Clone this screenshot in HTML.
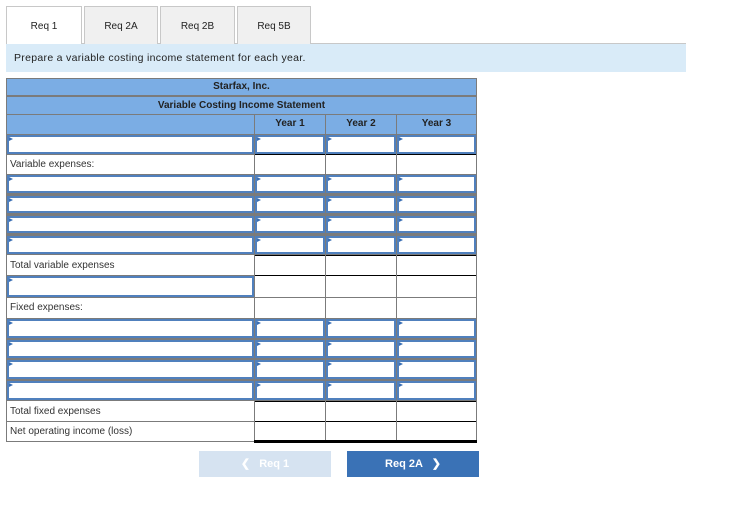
<!DOCTYPE html>
<html><head><style>
body{margin:0;width:743px;height:518px;background:#fff;font-family:"Liberation Sans",Verdana,sans-serif;position:relative;overflow:hidden}
.a{position:absolute;box-sizing:border-box}
.tab{top:6px;height:38px;background:#f0f0f0;border:1px solid #c8c8c8;border-bottom:none;font-size:10px;color:#222;text-align:center;line-height:40px}
.c{position:absolute;box-sizing:border-box;background:#fff;font-size:10px;color:#333;padding-left:3px;line-height:19px}
.i{box-shadow:inset 0 0 0 2px #5080bd}
.i:before{content:"";position:absolute;left:2px;top:2px;border-left:4px solid #3a6fb5;border-top:2.5px solid transparent;border-bottom:2.5px solid transparent}
.bt{border-top:1px solid #000}
.h{position:absolute;background:#7badE4;font-size:10px;font-weight:bold;color:#222;text-align:center;box-sizing:border-box}
</style></head><body>
<div class="a" style="left:6px;top:43px;width:680px;height:1px;background:#c8c8c8"></div>
<div class="a tab" style="left:6px;width:76px;background:#fff;height:39px">Req 1</div>
<div class="a tab" style="left:84px;width:74px">Req 2A</div>
<div class="a tab" style="left:160px;width:75px">Req 2B</div>
<div class="a tab" style="left:237px;width:74px">Req 5B</div>
<div class="a" style="left:6px;top:44px;width:680px;height:28px;background:#d9ebf8;font-size:10.5px;color:#222;padding-left:8px;line-height:28px;letter-spacing:0.3px">Prepare a variable costing income statement for each year.</div>

<div class="a" style="left:6px;top:78px;width:471px;height:364px;background:#7b7b7b"></div>
<div class="h" style="left:7px;top:79px;width:469px;height:16px;line-height:16px">Starfax, Inc.</div>
<div class="h" style="left:7px;top:97px;width:469px;height:17px;line-height:17px">Variable Costing Income Statement</div>
<div class="h" style="left:7px;top:115px;width:247px;height:19px"></div>
<div class="h" style="left:255px;top:115px;width:70px;height:19px;line-height:17px">Year 1</div>
<div class="h" style="left:326px;top:115px;width:70px;height:19px;line-height:17px">Year 2</div>
<div class="h" style="left:397px;top:115px;width:79px;height:19px;line-height:17px">Year 3</div>

<div class="c i" style="left:7px;top:135px;width:247px;height:19px"></div>
<div class="c i" style="left:255px;top:135px;width:70px;height:19px"></div>
<div class="c i" style="left:326px;top:135px;width:70px;height:19px"></div>
<div class="c i" style="left:397px;top:135px;width:79px;height:19px"></div>
<div class="c" style="left:7px;top:155px;width:247px;height:19px">Variable expenses:</div>
<div class="c bt" style="left:255px;top:154px;width:70px;height:20px"></div>
<div class="c bt" style="left:326px;top:154px;width:70px;height:20px"></div>
<div class="c bt" style="left:397px;top:154px;width:79px;height:20px"></div>
<div class="c i" style="left:7px;top:175px;width:247px;height:18px"></div><div class="c i" style="left:255px;top:175px;width:70px;height:18px"></div><div class="c i" style="left:326px;top:175px;width:70px;height:18px"></div><div class="c i" style="left:397px;top:175px;width:79px;height:18px"></div>
<div class="c i" style="left:7px;top:196px;width:247px;height:17px"></div><div class="c i" style="left:255px;top:196px;width:70px;height:17px"></div><div class="c i" style="left:326px;top:196px;width:70px;height:17px"></div><div class="c i" style="left:397px;top:196px;width:79px;height:17px"></div>
<div class="c i" style="left:7px;top:216px;width:247px;height:17px"></div><div class="c i" style="left:255px;top:216px;width:70px;height:17px"></div><div class="c i" style="left:326px;top:216px;width:70px;height:17px"></div><div class="c i" style="left:397px;top:216px;width:79px;height:17px"></div>
<div class="c i" style="left:7px;top:236px;width:247px;height:18px"></div><div class="c i" style="left:255px;top:236px;width:70px;height:18px"></div><div class="c i" style="left:326px;top:236px;width:70px;height:18px"></div><div class="c i" style="left:397px;top:236px;width:79px;height:18px"></div>
<div class="c" style="left:7px;top:255px;width:247px;height:20px;line-height:22px">Total variable expenses</div>
<div class="c bt" style="left:255px;top:255px;width:70px;height:21px"></div>
<div class="c bt" style="left:326px;top:255px;width:70px;height:21px"></div>
<div class="c bt" style="left:397px;top:255px;width:79px;height:21px"></div>
<div class="c i" style="left:7px;top:276px;width:247px;height:21px"></div>
<div class="c bt" style="left:255px;top:275px;width:70px;height:22px"></div>
<div class="c bt" style="left:326px;top:275px;width:70px;height:22px"></div>
<div class="c bt" style="left:397px;top:275px;width:79px;height:22px"></div>
<div class="c" style="left:7px;top:298px;width:247px;height:20px">Fixed expenses:</div>
<div class="c" style="left:255px;top:298px;width:70px;height:20px"></div>
<div class="c" style="left:326px;top:298px;width:70px;height:20px"></div>
<div class="c" style="left:397px;top:298px;width:79px;height:20px"></div>
<div class="c i" style="left:7px;top:319px;width:247px;height:19px"></div><div class="c i" style="left:255px;top:319px;width:70px;height:19px"></div><div class="c i" style="left:326px;top:319px;width:70px;height:19px"></div><div class="c i" style="left:397px;top:319px;width:79px;height:19px"></div>
<div class="c i" style="left:7px;top:340px;width:247px;height:18px"></div><div class="c i" style="left:255px;top:340px;width:70px;height:18px"></div><div class="c i" style="left:326px;top:340px;width:70px;height:18px"></div><div class="c i" style="left:397px;top:340px;width:79px;height:18px"></div>
<div class="c i" style="left:7px;top:360px;width:247px;height:19px"></div><div class="c i" style="left:255px;top:360px;width:70px;height:19px"></div><div class="c i" style="left:326px;top:360px;width:70px;height:19px"></div><div class="c i" style="left:397px;top:360px;width:79px;height:19px"></div>
<div class="c i" style="left:7px;top:381px;width:247px;height:19px"></div><div class="c i" style="left:255px;top:381px;width:70px;height:19px"></div><div class="c i" style="left:326px;top:381px;width:70px;height:19px"></div><div class="c i" style="left:397px;top:381px;width:79px;height:19px"></div>
<div class="c" style="left:7px;top:401px;width:247px;height:20px;line-height:22px">Total fixed expenses</div>
<div class="c bt" style="left:255px;top:401px;width:70px;height:20px"></div>
<div class="c bt" style="left:326px;top:401px;width:70px;height:20px"></div>
<div class="c bt" style="left:397px;top:401px;width:79px;height:20px"></div>
<div class="c" style="left:7px;top:422px;width:247px;height:19px;line-height:20px">Net operating income (loss)</div>
<div class="c bt" style="left:255px;top:421px;width:70px;height:21px"></div>
<div class="c bt" style="left:326px;top:421px;width:70px;height:21px"></div>
<div class="c bt" style="left:397px;top:421px;width:79px;height:21px"></div>
<div class="a" style="left:254px;top:440px;width:223px;height:3px;background:#000"></div>

<div class="a" style="left:199px;top:451px;width:132px;height:26px;background:#d6e3f1;color:#fff;font-size:11px;font-weight:bold;text-align:center;line-height:26px">&#10094;&nbsp;&nbsp; Req 1</div>
<div class="a" style="left:347px;top:451px;width:132px;height:26px;background:#3a72b6;color:#fff;font-size:11px;font-weight:bold;text-align:center;line-height:26px">Req 2A &nbsp;&nbsp;&#10095;</div>
</body></html>
